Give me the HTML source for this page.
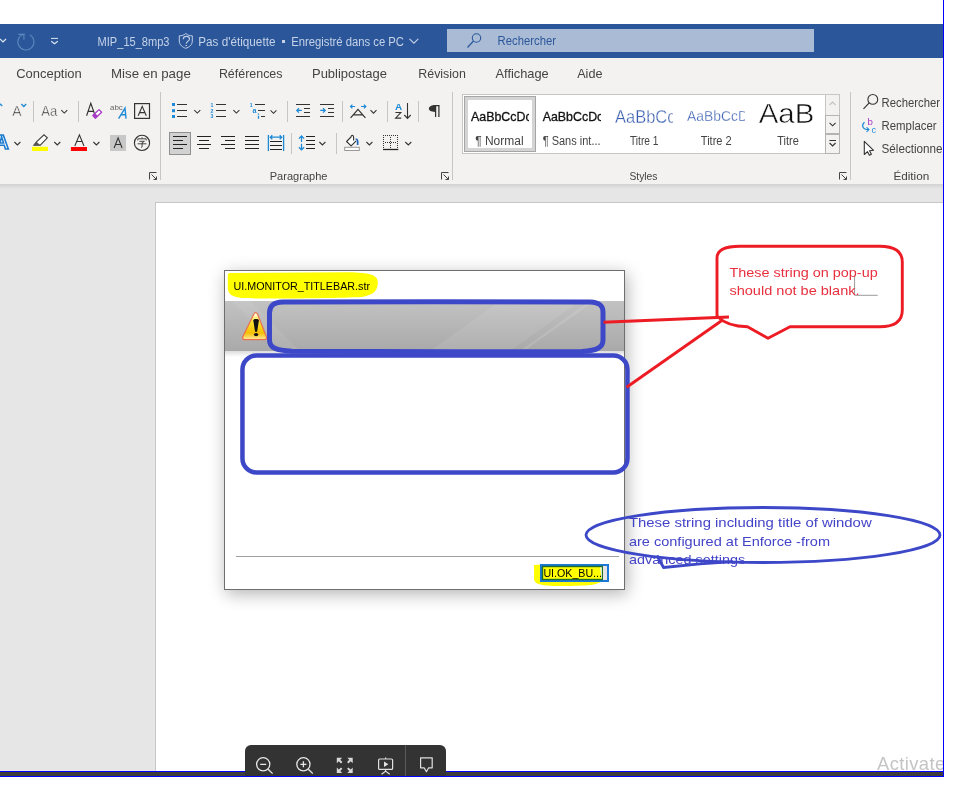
<!DOCTYPE html>
<html><head><meta charset="utf-8">
<style>
*{margin:0;padding:0;box-sizing:border-box}
html,body{width:972px;height:791px;overflow:hidden;background:#fff;font-family:"Liberation Sans",sans-serif}
.a{position:absolute}
svg text{font-family:"Liberation Sans",sans-serif}
svg.a{will-change:transform}
</style></head><body>
<div class="a" style="left:0;top:24px;width:943px;height:34px;background:#2b579a"></div>
<div class="a" style="left:0;top:58px;width:943px;height:126px;background:#f3f2f1"></div>
<div class="a" style="left:0;top:184px;width:943px;height:587px;background:#e6e6e6"></div>
<div class="a" style="left:0;top:184px;width:943px;height:5px;background:linear-gradient(#d2d2d2,#e6e6e6)"></div>
<div class="a" style="left:155px;top:202px;width:788px;height:569px;background:#fff;border-left:1px solid #c6c6c6;border-top:1px solid #c6c6c6"></div>
<div class="a" style="left:0;top:771px;width:944px;height:6px;background:#3c3c3c;border-top:1px solid #0000ff;border-bottom:1px solid #0000ff"></div>
<div class="a" style="left:447px;top:29px;width:367px;height:23px;background:#a9bbd5"></div>

<svg class="a" style="left:0;top:0" width="972" height="200" viewBox="0 0 972 200">
<g fill="none">
<path d="M0,39 l3,3 l3,-3" stroke="#dde6f3" stroke-width="1.2"/>
<path d="M29.9,35 A8,8 0 1 1 24.8,34" stroke="#5f87bf" stroke-width="1.1"/>
<path d="M18.3,34.4 h5.6 v5.3" stroke="#5f87bf" stroke-width="1.1"/>
<path d="M51,38.4 h7" stroke="#dde6f3" stroke-width="1"/>
<path d="M51.2,41.2 l3.3,2.6 l3.3,-2.6" stroke="#dde6f3" stroke-width="1.1"/>
<path d="M185.8,33.5 C183.5,35.5 181.5,35.8 179.3,35.8 V41 C179.3,45 182.5,47.2 185.8,48.3 C189.1,47.2 192.3,45 192.3,41 V35.8 C190.1,35.8 188.1,35.5 185.8,33.5 Z" stroke="#c3d0e6" stroke-width="1"/>
<path d="M183.3,39.3 C183.3,37.3 184.6,36.4 186.4,36.4 C188.3,36.4 189.5,37.5 189.5,39 C189.5,41 186.4,41.3 186.2,43.8" stroke="#c3d0e6" stroke-width="1.1"/>
<path d="M185.4,45.5 h1.6" stroke="#c3d0e6" stroke-width="1.1"/>
<path d="M409.5,38.8 l4.4,4.4 l4.4,-4.4" stroke="#c3d0e6" stroke-width="1.2"/>
<circle cx="476.5" cy="38" r="4.2" stroke="#2b579a" stroke-width="1.1"/>
<path d="M473.5,41 L467.5,47.5" stroke="#2b579a" stroke-width="1.2"/>
</g>
<rect x="282" y="40" width="3" height="3" fill="#c3d0e6"/>
<g fill="#c5d2e7" font-size="12">
<text x="97.6" y="45.9" textLength="71.9" lengthAdjust="spacingAndGlyphs">MIP_15_8mp3</text>
<text x="198.3" y="45.9" textLength="77.1" lengthAdjust="spacingAndGlyphs">Pas d'étiquette</text>
<text x="291.3" y="45.9" textLength="112.7" lengthAdjust="spacingAndGlyphs">Enregistré dans ce PC</text>
</g>
<text x="497.6" y="44.9" font-size="12" fill="#2b579a" textLength="58.4" lengthAdjust="spacingAndGlyphs">Rechercher</text>
<g fill="#444" font-size="13">
<text x="16.2" y="78" textLength="65.6" lengthAdjust="spacingAndGlyphs">Conception</text>
<text x="111" y="78" textLength="79.8" lengthAdjust="spacingAndGlyphs">Mise en page</text>
<text x="218.9" y="78" textLength="63.6" lengthAdjust="spacingAndGlyphs">Références</text>
<text x="312" y="78" textLength="75" lengthAdjust="spacingAndGlyphs">Publipostage</text>
<text x="418.3" y="78" textLength="47.6" lengthAdjust="spacingAndGlyphs">Révision</text>
<text x="495.5" y="78" textLength="53.2" lengthAdjust="spacingAndGlyphs">Affichage</text>
<text x="577.2" y="78" textLength="25.3" lengthAdjust="spacingAndGlyphs">Aide</text>
</g>
<g fill="#444" font-size="11">
<text x="269.7" y="179.8" textLength="57.8" lengthAdjust="spacingAndGlyphs">Paragraphe</text>
<text x="629.4" y="179.8" textLength="28.1" lengthAdjust="spacingAndGlyphs">Styles</text>
<text x="893.4" y="179.8" textLength="35.9" lengthAdjust="spacingAndGlyphs">Édition</text>
</g>
<g fill="#444" font-size="12">
<text x="881.5" y="106.6" textLength="58.5" lengthAdjust="spacingAndGlyphs">Rechercher</text>
<text x="881.5" y="129.5" textLength="55.1" lengthAdjust="spacingAndGlyphs">Remplacer</text>
<text x="881.5" y="152.7" textLength="65" lengthAdjust="spacingAndGlyphs">Sélectionner</text>
</g>
</svg>

<svg class="a" style="left:0;top:0" width="972" height="200" viewBox="0 0 972 200">
<!-- separators -->
<g fill="#c8c6c4">
<rect x="160" y="92" width="1" height="88"/>
<rect x="452" y="92" width="1" height="88"/>
<rect x="850" y="92" width="1" height="88"/>
<rect x="33" y="101" width="1" height="21"/>
<rect x="78" y="101" width="1" height="21"/>
<rect x="287" y="101" width="1" height="21"/>
<rect x="342" y="101" width="1" height="21"/>
<rect x="387" y="101" width="1" height="21"/>
<rect x="418" y="101" width="1" height="21"/>
<rect x="291" y="133" width="1" height="21"/>
<rect x="336" y="133" width="1" height="21"/>
</g>
<!-- chevrons -->
<g fill="none" stroke="#333" stroke-width="1.05">
<path d="M61.3,110.2 l3,2.9 l3,-2.9"/>
<path d="M194.3,110.2 l3,2.9 l3,-2.9"/>
<path d="M233.4,110.2 l3,2.9 l3,-2.9"/>
<path d="M270.6,110.4 l2.9,2.9 l2.9,-2.9"/>
<path d="M370.5,110.2 l3,3 l3,-3"/>
<path d="M14.4,142 l3,2.9 l3,-2.9"/>
<path d="M54.3,142 l3,2.9 l3,-2.9"/>
<path d="M93.4,142 l3,2.9 l3,-2.9"/>
<path d="M319.4,142 l3,2.9 l3,-2.9"/>
<path d="M366.4,142 l3,2.9 l3,-2.9"/>
<path d="M405.3,142 l3,2.9 l3,-2.9"/>
</g>
<!-- dialog launchers -->
<g fill="none" stroke="#444" stroke-width="1">
<path d="M149.5,179.5 v-7 h7"/><path d="M151.5,174.5 l5,5 M156.5,176.5 v3 h-3"/>
<path d="M441.5,179.5 v-7 h7"/><path d="M443.5,174.5 l5,5 M448.5,176.5 v3 h-3"/>
<path d="M839.5,179.5 v-7 h7"/><path d="M841.5,174.5 l5,5 M846.5,176.5 v3 h-3"/>
</g>
<!-- FONT row 1 -->
<path d="M-2,106.8 L0.6,104.2 L2.3,106.2" fill="none" stroke="#1e8ad6" stroke-width="1.2"/>
<text x="12.3" y="116.2" font-size="14.4" fill="#333" stroke="#f3f2f1" stroke-width="0.45" textLength="9.3" lengthAdjust="spacingAndGlyphs">A</text>
<path d="M21.4,104 l2.4,2.5 l2.4,-2.5" fill="none" stroke="#1e8ad6" stroke-width="1.3"/>
<text x="41.2" y="116.2" font-size="14.4" fill="#333" stroke="#f3f2f1" stroke-width="0.45" textLength="16" lengthAdjust="spacingAndGlyphs">Aa</text>
<path d="M86.6,115.8 L90.8,103.3 L95.2,115.8 M88.2,111.4 h5.2" fill="none" stroke="#333" stroke-width="1.1"/>
<path d="M92.8,115.5 L99,109.6 L101.6,112.3 L95.4,118.2 Z" fill="#fff" stroke="#a83ac4" stroke-width="1.3" stroke-linejoin="round"/>
<path d="M92.8,115.5 L95.2,113.2 L97.8,115.9 L95.4,118.2 Z" fill="#a83ac4"/>
<text x="110" y="109.6" font-size="7.6" fill="#666" textLength="12.8" lengthAdjust="spacingAndGlyphs">abc</text>
<path d="M118.6,118.6 L125,108.2 L126,118.6 M121.2,114.8 h4.6" fill="none" stroke="#1e8ad6" stroke-width="1.4"/>
<rect x="134.6" y="103.6" width="14.9" height="14.8" fill="none" stroke="#333" stroke-width="1.2"/>
<path d="M138.2,115.8 L142.2,106.4 L146.3,115.8 M139.6,112.6 h5.2" fill="none" stroke="#333" stroke-width="1.1"/>
<!-- FONT row 2 -->
<text x="-5.4" y="148.9" font-size="19.8" font-weight="bold" fill="#fff" stroke="#1e7bd0" stroke-width="1.6">A</text>
<path d="M34,145.2 L36.5,141.8 L44,134.8 L47.3,137.8 L40.3,145.2 Z" fill="#fff" stroke="#444" stroke-width="1.2"/>
<path d="M33.5,145.6 L36.5,141.8 L40.3,145.2 Z" fill="#555"/>
<rect x="32" y="146.8" width="16" height="4.2" fill="#ffff00"/>
<path d="M74.8,146 L79.4,134.9 L84,146 M76.5,141.5 h5.8" fill="none" stroke="#333" stroke-width="1.1"/>
<rect x="70.9" y="147" width="16.1" height="4" fill="#ff0000"/>
<rect x="110" y="135" width="16" height="16" fill="#c8c8c8"/>
<path d="M114.1,148 L118.1,137.9 L122.1,148 M115.5,144.5 h5.2" fill="none" stroke="#333" stroke-width="1.1"/>
<circle cx="142" cy="142.9" r="7.6" fill="none" stroke="#333" stroke-width="1.15"/>
<g fill="none" stroke="#333" stroke-width="0.9">
<path d="M142,137.2 v1.2 M137.8,140.4 v-1.6 h8.4 v1.6 M139.4,141.3 h5 l-2.3,1.4 v4.2 l-1,0.6 M137.6,143.8 h8.8"/>
</g>
<!-- PARAGRAPH row1 -->
<g fill="#1e8ad6">
<rect x="172" y="103" width="3" height="3"/><rect x="172" y="109.2" width="3" height="3"/><rect x="172" y="115" width="3" height="3"/>
</g>
<g fill="none" stroke="#333" stroke-width="1.1">
<path d="M177,104.5 h10 M177,110.5 h10 M177,116.5 h10"/>
<path d="M216,104.5 h10 M216,110.5 h10 M216,116.5 h10"/>
<path d="M255,104.5 h10 M258,110.5 h7 M261,116.5 h4"/>
<path d="M296,104.5 h14 M304,108.5 h6 M304,112.5 h6 M296,116.5 h14"/>
<path d="M320,104.5 h14 M328,108.5 h6 M328,112.5 h6 M320,116.5 h14"/>
</g>
<g fill="#1e8ad6" font-size="5.2" font-weight="bold">
<text x="210.6" y="106.8">1</text><text x="210.6" y="112.6">2</text><text x="210.6" y="118.4">3</text>
<text x="249.8" y="106.8">1</text><text x="252.4" y="113.2" font-size="7.2">a</text>
</g>
<path d="M258.5,113.6 v1.1 M258.5,115.8 v2.9" stroke="#1e8ad6" stroke-width="1.3"/>
<path d="M301.8,110.4 h-5 M299,108.2 l-2.2,2.2 l2.2,2.2" fill="none" stroke="#1e8ad6" stroke-width="1.3"/>
<path d="M320.2,110.4 h5 M323,108.2 l2.2,2.2 l-2.2,2.2" fill="none" stroke="#1e8ad6" stroke-width="1.3"/>
<path d="M350.5,106.5 h4.6 M352.4,104.6 l-1.9,1.9 l1.9,1.9 M361,106.5 h4.8 M363.9,104.6 l1.9,1.9 l-1.9,1.9" fill="none" stroke="#1e8ad6" stroke-width="1.2"/>
<path d="M350.6,117.8 L358,109.4 L365.4,117.8 M353.4,114.8 h9.2" fill="none" stroke="#333" stroke-width="1.2"/>
<text x="395" y="109.6" font-size="8.5" font-weight="bold" fill="#1e8ad6" textLength="7.2" lengthAdjust="spacingAndGlyphs">A</text>
<path d="M395.4,112.5 h5.4 L395.6,118.1 h5.6" fill="none" stroke="#333" stroke-width="1.1"/>
<path d="M407.5,103 v15.2 M404.3,115 l3.2,3.4 l3.2,-3.4" fill="none" stroke="#333" stroke-width="1.1"/>
<path d="M433,105.6 h6.6 M435.6,105.6 v11.5 M438.9,105.6 v11.5" fill="none" stroke="#333" stroke-width="1.25"/>
<path d="M435.5,105 C430.2,105 428.8,107.5 428.8,108.6 C428.8,110 430.2,112 435.5,112 Z" fill="#333"/>
<!-- PARAGRAPH row2 -->
<rect x="169.5" y="132.5" width="21" height="22" fill="#d2d2d2" stroke="#8f8f8f" stroke-width="1"/>
<g fill="none" stroke="#222" stroke-width="1.1">
<path d="M173,136.5 h14 M173,140.5 h10 M173,144.5 h14 M173,148.5 h10"/>
<path d="M197,136.5 h14 M199,140.5 h10 M197,144.5 h14 M199,148.5 h10"/>
<path d="M221,136.5 h14 M225,140.5 h10 M221,144.5 h14 M225,148.5 h10"/>
<path d="M245,136.5 h14 M245,140.5 h14 M245,144.5 h14 M245,148.5 h14"/>
<path d="M270,141.5 h12 M270,145.5 h12 M270,149.5 h12"/>
<path d="M306,136.5 h9 M306,140.5 h9 M306,144.5 h9 M306,148.5 h9"/>
</g>
<g fill="none" stroke="#1e8ad6" stroke-width="1.3">
<path d="M268.4,135 v16 M283.6,135 v16 M270.3,137.2 h11.4 M272.3,135.2 l-2,2 l2,2 M279.7,135.2 l2,2 l-2,2"/>
<path d="M301.5,136.2 v5.8 M301.5,143.8 v5.9 M298.9,138.6 l2.6,-2.6 l2.6,2.6 M298.9,147.2 l2.6,2.6 l2.6,-2.6" stroke-width="1.25"/>
</g>
<path d="M353.6,140.6 V137.2 C353.6,134.8 351,134.8 351,137 L346.6,141.5 L351.1,145.9 L356.2,140.8" fill="#fff" stroke="#333" stroke-width="1.1" stroke-linejoin="round"/>
<path d="M355.6,139 C357.6,139 358,141 357.6,145" fill="none" stroke="#1e66b8" stroke-width="1.7"/>
<rect x="344.7" y="147.3" width="14.6" height="3.2" fill="#fff" stroke="#999" stroke-width="1"/>
<g fill="#333"><rect x="383" y="135" width="1" height="1"/><rect x="385" y="135" width="1" height="1"/><rect x="387" y="135" width="1" height="1"/><rect x="389" y="135" width="1" height="1"/><rect x="391" y="135" width="1" height="1"/><rect x="393" y="135" width="1" height="1"/><rect x="395" y="135" width="1" height="1"/><rect x="397" y="135" width="1" height="1"/><rect x="383" y="137" width="1" height="1"/><rect x="397" y="137" width="1" height="1"/><rect x="390" y="137" width="1" height="1"/><rect x="383" y="139" width="1" height="1"/><rect x="397" y="139" width="1" height="1"/><rect x="390" y="139" width="1" height="1"/><rect x="383" y="141" width="1" height="1"/><rect x="397" y="141" width="1" height="1"/><rect x="390" y="141" width="1" height="1"/><rect x="383" y="143" width="1" height="1"/><rect x="397" y="143" width="1" height="1"/><rect x="390" y="143" width="1" height="1"/><rect x="383" y="145" width="1" height="1"/><rect x="397" y="145" width="1" height="1"/><rect x="390" y="145" width="1" height="1"/><rect x="383" y="147" width="1" height="1"/><rect x="397" y="147" width="1" height="1"/><rect x="390" y="147" width="1" height="1"/><rect x="385" y="142" width="1" height="1"/><rect x="387" y="142" width="1" height="1"/><rect x="389" y="142" width="1" height="1"/><rect x="391" y="142" width="1" height="1"/><rect x="393" y="142" width="1" height="1"/><rect x="395" y="142" width="1" height="1"/></g>
<path d="M383,149.5 h15.3" stroke="#222" stroke-width="1.3"/>
<!-- EDITION -->
<circle cx="872.8" cy="99.4" r="4.9" fill="none" stroke="#333" stroke-width="1.1"/>
<path d="M869.2,102.8 L863.5,108.8" stroke="#333" stroke-width="1.2"/>
<text x="867.6" y="124.5" font-size="9.6" fill="#a83ac4" textLength="5.4" lengthAdjust="spacingAndGlyphs">b</text>
<text x="871.6" y="133" font-size="9.6" fill="#1e8ad6" textLength="4.6" lengthAdjust="spacingAndGlyphs">c</text>
<path d="M864.5,122.2 C861.2,125 862.2,129.6 868.6,129.6 M866.6,127.4 l2.3,2.2 l-2.3,2.3" fill="none" stroke="#1e8ad6" stroke-width="1.2"/>
<path d="M864.3,141.3 L873.6,150.3 L869.5,150.8 L871.4,154.2 L869.4,155.2 L867.5,151.7 L864.3,154.5 Z" fill="#fff" stroke="#333" stroke-width="1.1" stroke-linejoin="round"/>
</svg>

<svg class="a" style="left:0;top:0" width="972" height="200" viewBox="0 0 972 200">
<defs>
<clipPath id="c1"><rect x="468" y="99" width="61" height="49"/></clipPath>
<clipPath id="c2"><rect x="538" y="99" width="63" height="49"/></clipPath>
<clipPath id="c3"><rect x="610" y="99" width="63" height="49"/></clipPath>
<clipPath id="c4"><rect x="682" y="99" width="63" height="49"/></clipPath>
<clipPath id="c5"><rect x="754" y="103" width="70" height="49"/></clipPath>
</defs>
<rect x="462.5" y="94.5" width="377" height="59" fill="#fff" stroke="#c6c6c6" stroke-width="1"/>
<rect x="825" y="95" width="14" height="58" fill="#f3f2f1"/>
<path d="M825.5,95 v58" stroke="#c6c6c6" stroke-width="1"/>
<rect x="825.5" y="115.5" width="14" height="18" fill="#f3f2f1" stroke="#b4b4b4" stroke-width="1"/>
<rect x="825.5" y="134.5" width="14" height="19" fill="#f3f2f1" stroke="#b4b4b4" stroke-width="1"/>
<path d="M829.6,105 l3,-3 l3,3" fill="none" stroke="#c3c3c3" stroke-width="1.1"/>
<path d="M829.6,122.8 l3,3 l3,-3" fill="none" stroke="#333" stroke-width="1.1"/>
<path d="M829.4,140.5 h6.6 M829.6,143 l3,3 l3,-3" fill="none" stroke="#333" stroke-width="1.1"/>
<rect x="464.5" y="96.5" width="71" height="55" fill="#fff" stroke="#a6a6a6" stroke-width="1"/>
<rect x="466.5" y="98.5" width="67" height="51" fill="none" stroke="#d4d4d4" stroke-width="3"/>
<g clip-path="url(#c1)"><text x="471" y="120.9" font-size="12.4" fill="#111" stroke="#111" stroke-width="0.3">AaBbCcDc</text></g>
<g clip-path="url(#c2)"><text x="542.7" y="120.5" font-size="12.4" fill="#111" stroke="#111" stroke-width="0.3">AaBbCcDc</text></g>
<g clip-path="url(#c3)"><text x="615" y="123.1" font-size="18.7" fill="#3a5fb0" stroke="#fff" stroke-width="0.35" textLength="60.5" lengthAdjust="spacingAndGlyphs">AaBbCc</text></g>
<g clip-path="url(#c4)"><text x="687" y="120.9" font-size="15.5" fill="#3a5fb0" stroke="#fff" stroke-width="0.3" textLength="61" lengthAdjust="spacingAndGlyphs">AaBbCcD</text></g>
<g clip-path="url(#c5)"><text x="758.7" y="122.9" font-size="28" fill="#111" stroke="#fff" stroke-width="0.55" textLength="55.6" lengthAdjust="spacingAndGlyphs">AaB</text></g>
<g fill="#444" font-size="12">
<text x="475.2" y="144.6" textLength="48.4" lengthAdjust="spacingAndGlyphs">¶ Normal</text>
<text x="542.7" y="145.2" textLength="57.9" lengthAdjust="spacingAndGlyphs">¶ Sans int...</text>
<text x="630" y="145.2" textLength="28.5" lengthAdjust="spacingAndGlyphs">Titre 1</text>
<text x="700.8" y="144.5" textLength="30.9" lengthAdjust="spacingAndGlyphs">Titre 2</text>
<text x="777.2" y="144.5" textLength="21.6" lengthAdjust="spacingAndGlyphs">Titre</text>
</g>
</svg>

<div class="a" style="left:224px;top:270px;width:401px;height:320px;background:#fff;border:1px solid #6e6e6e;box-shadow:2px 4px 16px rgba(0,0,0,0.3)"></div>
<div class="a" style="left:225px;top:301px;width:399px;height:50px;background:linear-gradient(#c2c2c2,#a9a9a9)"></div>
<div class="a" style="left:225px;top:351px;width:399px;height:6px;background:linear-gradient(#dcdcdc,#fff)"></div>
<svg class="a" style="left:0;top:0" width="972" height="791" viewBox="0 0 972 791">
<defs>
<linearGradient id="wy" x1="0" y1="0" x2="0" y2="1">
<stop offset="0" stop-color="#ffffff"/><stop offset="0.3" stop-color="#ffe93a"/><stop offset="0.75" stop-color="#f5bf00"/><stop offset="1" stop-color="#fde8a0"/>
</linearGradient>
</defs>
<path d="M232,301 L282,351 L300,351 L250,301 Z" fill="#fff" opacity="0.07"/>
<path d="M430,351 L500,301 L580,301 L510,351 Z" fill="#fff" opacity="0.08"/><path d="M520,351 L590,301 L594,301 L524,351 Z" fill="#fff" opacity="0.12"/>
<path d="M227.8,275 C227.8,273.3 229,273 232,273 L345,272.3 C366,272.3 377.8,274 377.8,282 C377.8,291 374,294.5 362,297 C330,298.5 262,299 242,298 C232,297 228,294 227.8,288 Z" fill="#ffff00"/>
<text x="233.6" y="289.6" font-size="11.6" fill="#000" textLength="136.4" lengthAdjust="spacingAndGlyphs">UI.MONITOR_TITLEBAR.str</text>
<path d="M253.9,314 C254.8,312.3 256.6,312.3 257.5,314 L266.4,336.8 C267,338.6 266.2,339.6 264.6,339.6 L244.6,339.6 C243,339.6 242.2,338.6 242.8,336.8 Z" fill="url(#wy)" stroke="#e8704e" stroke-width="1.2"/>
<path d="M253.3,320.5 C253.3,318.6 258.9,318.6 258.9,320.5 L257.1,331.8 L255.1,331.8 Z" fill="#111"/>
<ellipse cx="256.1" cy="334.6" rx="2.2" ry="1.6" fill="#111"/>
<path d="M283,302 C320,301.5 560,301.5 590,302 C600,302.5 603,306 603,312 L603,340 C603,347 598,350.5 582,351.5 C500,352 330,352 292,351.3 C276,350.5 269.5,348 269.5,340 L269.5,313 C269.5,306 273,302.3 283,302 Z" fill="none" stroke="#3c48c8" stroke-width="5"/>
<rect x="242.45" y="355.55" width="385" height="117" rx="14" ry="14" fill="none" stroke="#3c48c8" stroke-width="4.5"/>
<rect x="236" y="556" width="383" height="1" fill="#a0a0a0"/>
<path d="M534,565 C540,564 560,564.5 600,564.5 L601.5,580 C600,585 590,586 560,586 C540,586 536,584 534,580 Z" fill="#ffff00"/>
<rect x="541" y="565" width="67" height="16" fill="none" stroke="#1a78d6" stroke-width="2"/>
<rect x="542.5" y="566.5" width="60" height="13" fill="none" stroke="#1f6e2a" stroke-width="1.4"/>
<rect x="603" y="566" width="4" height="14" fill="#e4e4e4"/>
<text x="543.4" y="576.8" font-size="11" fill="#000" textLength="58.6" lengthAdjust="spacingAndGlyphs">UI.OK_BU...</text>
</svg>

<svg class="a" style="left:0;top:0" width="972" height="791" viewBox="0 0 972 791">
<g fill="none" stroke="#ed1c24" stroke-width="2.9" stroke-linejoin="round">
<path d="M717,258 C717,250 725,246.3 740,246.3 L879.5,246.3 C895,246.3 902.3,252 902.3,262 L902.3,310 C902.3,321 895,326.8 879.5,326.8 L790,326.8 L768,338.3 L747.5,326.8 C735,326.5 725,324 718,317 L717,316 Z"/>
<path d="M603.5,322.3 L729,317"/>
<path d="M626.6,387.2 L721.5,320.8"/>
</g>
<path d="M854.6,276 V295.3 H877.7" fill="none" stroke="#9a9a9a" stroke-width="1"/>
<g fill="#e8303e" font-size="13">
<text x="729.4" y="276.5" textLength="148.3" lengthAdjust="spacingAndGlyphs">These string on pop-up</text>
<text x="729.4" y="295.1" textLength="130.2" lengthAdjust="spacingAndGlyphs">should not be blank.</text>
</g>
<g fill="none" stroke="#3c48c8" stroke-width="2.8">
<ellipse cx="763" cy="535" rx="177" ry="27.5"/>
<path d="M657,555.5 L663.5,567.5 L700,563.8 L733,561.6" stroke-linejoin="round"/>
</g>
<g fill="#4444c8" font-size="13">
<text x="628.9" y="526.5" textLength="242.8" lengthAdjust="spacingAndGlyphs">These string including title of window</text>
<text x="628.9" y="545.7" textLength="201.1" lengthAdjust="spacingAndGlyphs">are configured at Enforce -from</text>
<text x="628.9" y="564.2" textLength="116.3" lengthAdjust="spacingAndGlyphs">advanced settings</text>
</g>
</svg>

<div class="a" style="left:245px;top:745px;width:201px;height:31px;background:#333;border-radius:6px 6px 0 0"></div>
<svg class="a" style="left:0;top:0" width="972" height="791" viewBox="0 0 972 791">
<g fill="none" stroke="#e8e8e8" stroke-width="1.3">
<circle cx="263.2" cy="764.3" r="6.6"/>
<path d="M260.2,764.3 h6 M268.1,769.2 L272.6,773.6"/>
<circle cx="303.4" cy="764.3" r="6.6"/>
<path d="M300.4,764.3 h6 M303.4,761.3 v6 M308.3,769.2 L312.8,773.6"/>
</g>
<g fill="none" stroke="#d8d8d8" stroke-width="2">
<path d="M338.5,759.5 l3.2,3.2 M351,759.5 l-3.2,3.2 M338.5,771.3 l3.2,-3.2 M351,771.3 l-3.2,-3.2"/>
</g>
<g fill="#d8d8d8">
<path d="M336.8,757.8 h5.4 L336.8,763.2 Z M352.7,757.8 h-5.4 L352.7,763.2 Z M336.8,773 h5.4 L336.8,767.6 Z M352.7,773 h-5.4 L352.7,767.6 Z"/>
</g>
<g fill="none" stroke="#e0e0e0" stroke-width="1.2">
<rect x="378.6" y="759" width="14" height="10.4" rx="1"/>
<path d="M385.6,757.5 v1.5 M385.6,769.5 v1.6 L381.5,774.3 M385.6,771.1 L389.7,774.3"/>
<path d="M420.6,757.8 h11.6 v10 h-3.5 l-2.3,4 l-2.3,-4 h-3.5 Z" stroke-linejoin="round"/>
</g>
<path d="M384,761.5 L388.4,764.2 L384,766.9 Z" fill="#e0e0e0"/>
<rect x="405" y="745" width="1" height="31" fill="#5a5a5a"/>
</svg>

<div class="a" style="left:870px;top:748px;width:73px;height:23px;overflow:hidden"><div class="a" style="left:7px;top:6.5px;font-size:18.4px;line-height:1;color:#c4c4c4;white-space:nowrap;letter-spacing:0.4px">Activate Windows</div></div>
<div class="a" style="left:944px;top:0;width:28px;height:791px;background:#fff"></div>
<div class="a" style="left:943px;top:0;width:1px;height:777px;background:#0000ff"></div>

</body></html>
